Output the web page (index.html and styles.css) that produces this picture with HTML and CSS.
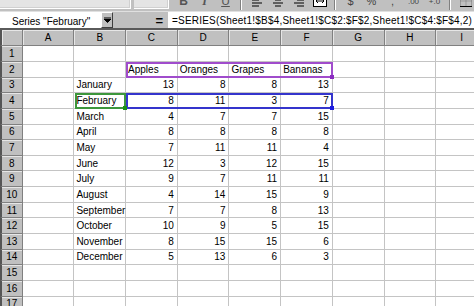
FILE: index.html
```html
<!DOCTYPE html>
<html>
<head>
<meta charset="utf-8">
<link rel="stylesheet" href="styles.css">
</head>
<body>
<div class="toolbar">
  <div class="combo combo-font"><span class="arrow">▼</span></div>
  <div class="combo combo-size"><span class="arrow">▼</span></div>
  <div class="tbtn bold">B</div>
  <div class="tbtn ital">I</div>
  <div class="tbtn under">U</div>
  <div class="tsep"></div>
  <div class="tbtn icon"><svg width="12" height="12" viewBox="0 0 12 12"><path d="M1 2h10M1 5h7M1 8h10M1 11h7" stroke="#000" stroke-width="1"/></svg></div>
  <div class="tbtn icon"><svg width="12" height="12" viewBox="0 0 12 12"><path d="M1 2h10M3 5h6M1 8h10M3 11h6" stroke="#000" stroke-width="1"/></svg></div>
  <div class="tbtn icon"><svg width="12" height="12" viewBox="0 0 12 12"><path d="M1 2h10M4 5h7M1 8h10M4 11h7" stroke="#000" stroke-width="1"/></svg></div>
  <div class="tbtn icon"><svg width="14" height="12" viewBox="0 0 14 12"><rect x="0.5" y="0.5" width="13" height="11" fill="#fff" stroke="#000"/><path d="M3 6h8M3 6l2-2M3 6l2 2M11 6l-2-2M11 6l-2 2" stroke="#000"/></svg></div>
  <div class="tsep"></div>
  <div class="tbtn sym">$</div>
  <div class="tbtn sym">%</div>
  <div class="tbtn sym">,</div>
  <div class="tbtn sym small">.00</div>
  <div class="tbtn sym small">+.0</div>
  <div class="tsep"></div>
  <div class="tbtn icon"><svg width="12" height="12" viewBox="0 0 12 12"><path d="M0.5 0.5h11v11h-11zM6 0.5v11M0.5 6h11" fill="none" stroke="#777" stroke-dasharray="1 1"/><path d="M0 11.5h12" stroke="#000"/></svg></div>
</div>

<div class="fbar">
  <div class="namebox">Series "February"</div>
  <div class="namebtn"><svg width="7" height="6" viewBox="0 0 7 6"><path d="M0 0h7M0 2h7L3.5 5.5z" fill="#000" stroke="#000" stroke-width="1"/></svg></div>
  <div class="eqarea"><span class="eq">=</span></div>
  <div class="formula">=SERIES(Sheet1!$B$4,Sheet1!$C$2:$F$2,Sheet1!$C$4:$F$4,2)</div>
</div>

<div class="sheet">
  <div class="corner"></div>
  <div class="ch">A</div><div class="ch">B</div><div class="ch">C</div><div class="ch">D</div><div class="ch">E</div><div class="ch">F</div><div class="ch">G</div><div class="ch">H</div><div class="ch">I</div>

  <div class="rh">1</div><div class="c"></div><div class="c"></div><div class="c"></div><div class="c"></div><div class="c"></div><div class="c"></div><div class="c"></div><div class="c"></div><div class="c"></div>
  <div class="rh">2</div><div class="c"></div><div class="c"></div><div class="c t">Apples</div><div class="c t">Oranges</div><div class="c t">Grapes</div><div class="c t">Bananas</div><div class="c"></div><div class="c"></div><div class="c"></div>
  <div class="rh">3</div><div class="c"></div><div class="c t">January</div><div class="c n">13</div><div class="c n">8</div><div class="c n">8</div><div class="c n">13</div><div class="c"></div><div class="c"></div><div class="c"></div>
  <div class="rh">4</div><div class="c"></div><div class="c t">February</div><div class="c n">8</div><div class="c n">11</div><div class="c n">3</div><div class="c n">7</div><div class="c"></div><div class="c"></div><div class="c"></div>
  <div class="rh">5</div><div class="c"></div><div class="c t">March</div><div class="c n">4</div><div class="c n">7</div><div class="c n">7</div><div class="c n">15</div><div class="c"></div><div class="c"></div><div class="c"></div>
  <div class="rh">6</div><div class="c"></div><div class="c t">April</div><div class="c n">8</div><div class="c n">8</div><div class="c n">8</div><div class="c n">8</div><div class="c"></div><div class="c"></div><div class="c"></div>
  <div class="rh">7</div><div class="c"></div><div class="c t">May</div><div class="c n">7</div><div class="c n">11</div><div class="c n">11</div><div class="c n">4</div><div class="c"></div><div class="c"></div><div class="c"></div>
  <div class="rh">8</div><div class="c"></div><div class="c t">June</div><div class="c n">12</div><div class="c n">3</div><div class="c n">12</div><div class="c n">15</div><div class="c"></div><div class="c"></div><div class="c"></div>
  <div class="rh">9</div><div class="c"></div><div class="c t">July</div><div class="c n">9</div><div class="c n">7</div><div class="c n">11</div><div class="c n">11</div><div class="c"></div><div class="c"></div><div class="c"></div>
  <div class="rh">10</div><div class="c"></div><div class="c t">August</div><div class="c n">4</div><div class="c n">14</div><div class="c n">15</div><div class="c n">9</div><div class="c"></div><div class="c"></div><div class="c"></div>
  <div class="rh">11</div><div class="c"></div><div class="c t">September</div><div class="c n">7</div><div class="c n">7</div><div class="c n">8</div><div class="c n">13</div><div class="c"></div><div class="c"></div><div class="c"></div>
  <div class="rh">12</div><div class="c"></div><div class="c t">October</div><div class="c n">10</div><div class="c n">9</div><div class="c n">5</div><div class="c n">15</div><div class="c"></div><div class="c"></div><div class="c"></div>
  <div class="rh">13</div><div class="c"></div><div class="c t">November</div><div class="c n">8</div><div class="c n">15</div><div class="c n">15</div><div class="c n">6</div><div class="c"></div><div class="c"></div><div class="c"></div>
  <div class="rh">14</div><div class="c"></div><div class="c t">December</div><div class="c n">5</div><div class="c n">13</div><div class="c n">6</div><div class="c n">3</div><div class="c"></div><div class="c"></div><div class="c"></div>
  <div class="rh">15</div><div class="c"></div><div class="c"></div><div class="c"></div><div class="c"></div><div class="c"></div><div class="c"></div><div class="c"></div><div class="c"></div><div class="c"></div>
  <div class="rh">16</div><div class="c"></div><div class="c"></div><div class="c"></div><div class="c"></div><div class="c"></div><div class="c"></div><div class="c"></div><div class="c"></div><div class="c"></div>
  <div class="rh">17</div><div class="c"></div><div class="c"></div><div class="c"></div><div class="c"></div><div class="c"></div><div class="c"></div><div class="c"></div><div class="c"></div><div class="c"></div>

  <div class="range range-purple"><span class="handle"></span></div>
  <div class="range range-blue"><span class="handle"></span></div>
  <div class="range range-green"><span class="handle"></span></div>
</div>
</body>
</html>
```
FILE: styles.css
```css
html, body {
  margin: 0;
  padding: 0;
  background: #fff;
  overflow: hidden;
  width: 474px;
  height: 306px;
  font-family: "Liberation Sans", Arial, sans-serif;
  font-size: 10px;
  color: #000;
}

/* toolbar (cut off at the top) */
.toolbar {
  height: 11px;
  background: #c0c0c0;
  display: flex;
  align-items: flex-end;
  overflow: hidden;
  white-space: nowrap;
}
.combo {
  height: 20px;
  margin-bottom: 2px;
  background: #e4e4e4;
  border-right: 1px solid #fff;
  border-bottom: 1px solid #fff;
  box-shadow: inset -1px -1px 0 #d0d0d0;
  position: relative;
  box-sizing: border-box;
  flex: none;
}
.combo-font { width: 131px; }
.combo-size { width: 35px; margin-left: 3px; }
.combo .arrow {
  position: absolute;
  right: 2px;
  bottom: 7px;
  font-size: 7px;
  line-height: 7px;
  color: #000;
}
.tbtn {
  height: 20px;
  width: 21px;
  flex: none;
  display: flex;
  align-items: center;
  justify-content: center;
  font-size: 12px;
  color: #555;
}
.tbtn.bold { margin-left: 4px; font-weight: bold; }
.tbtn.ital { font-style: italic; font-family: "Liberation Serif", serif; font-weight: bold; }
.tbtn.under { text-decoration: underline; }
.tbtn.sym { font-size: 11px; color: #444; }
.tbtn.small { font-size: 8px; }
.tbtn.icon svg { display: block; }
.tsep {
  width: 2px;
  height: 16px;
  margin: 0 4px 1px;
  border-left: 1px solid #808080;
  border-right: 1px solid #fff;
  box-sizing: border-box;
  flex: none;
}

/* formula bar */
.fbar {
  height: 19px;
  display: flex;
  background: #c0c0c0;
  border-top: 1px solid #e0e0e0;
  border-bottom: 2px solid #5a5a5a;
  box-sizing: border-box;
}
.namebox {
  width: 101px;
  flex: none;
  background: #fff;
  padding-left: 12px;
  box-sizing: border-box;
  font-size: 10px;
  line-height: 17px;
  padding-top: 1px;
  white-space: nowrap;
}
.namebtn {
  width: 12px;
  flex: none;
  background: #c0c0c0;
  border-top: 1px solid #fff;
  border-left: 1px solid #fff;
  border-right: 1px solid #404040;
  border-bottom: 1px solid #404040;
  box-sizing: border-box;
  display: flex;
  align-items: center;
  justify-content: center;
}
.eqarea {
  width: 55px;
  flex: none;
  display: flex;
  justify-content: flex-end;
  align-items: center;
  padding-right: 5px;
  box-sizing: border-box;
}
.eq {
  font-weight: bold;
  font-size: 13px;
  line-height: 13px;
}
.formula {
  flex: 1;
  background: #fff;
  padding-left: 4px;
  padding-top: 1px;
  line-height: 15px;
  font-size: 10px;
  letter-spacing: 0.2px;
  white-space: nowrap;
  overflow: hidden;
}

/* sheet grid */
.sheet {
  position: relative;
  display: grid;
  grid-template-columns: 22.7px repeat(9, 51.7px);
  grid-template-rows: 16.3px repeat(17, 15.65px);
  width: 488px;
}
.corner, .ch, .rh {
  background: #c0c0c0;
  box-sizing: border-box;
  border-right: 1px solid #808080;
  border-bottom: 1px solid #808080;
  box-shadow: inset 1px 1px 0 #e6e6e6;
  display: flex;
  align-items: center;
  justify-content: center;
  font-size: 10px;
}
.corner, .rh {
  border-left: 2px solid #555;
}
.rh {
  box-shadow: inset 0 1px 0 #e6e6e6;
}
.c {
  box-sizing: border-box;
  border-right: 1px solid #c4c4c4;
  border-bottom: 1px solid #c4c4c4;
  display: flex;
  align-items: center;
  white-space: nowrap;
  overflow: visible;
  font-size: 10px;
}
.c.t { padding-left: 2px; }
.c.n { justify-content: flex-end; padding-right: 3px; }

/* range-finder outlines (overlays) */
.range {
  position: absolute;
  box-sizing: border-box;
  border: 2px solid;
  pointer-events: none;
}
.range .handle {
  position: absolute;
  right: -3px;
  bottom: -3px;
  width: 4px;
  height: 4px;
}
.range-purple {
  left: 126px; top: 32px; width: 207px; height: 16px;
  border-color: #a04ccc;
}
.range-purple .handle { background: #8a2cc0; }
.range-blue {
  left: 126px; top: 63px; width: 207px; height: 16px;
  border-color: #3434cc;
}
.range-blue .handle { background: #1c1ce0; }
.range-green {
  left: 75px; top: 63px; width: 51px; height: 16px;
  border-color: #3c963c;
}
.range-green .handle { background: #189018; }
```
